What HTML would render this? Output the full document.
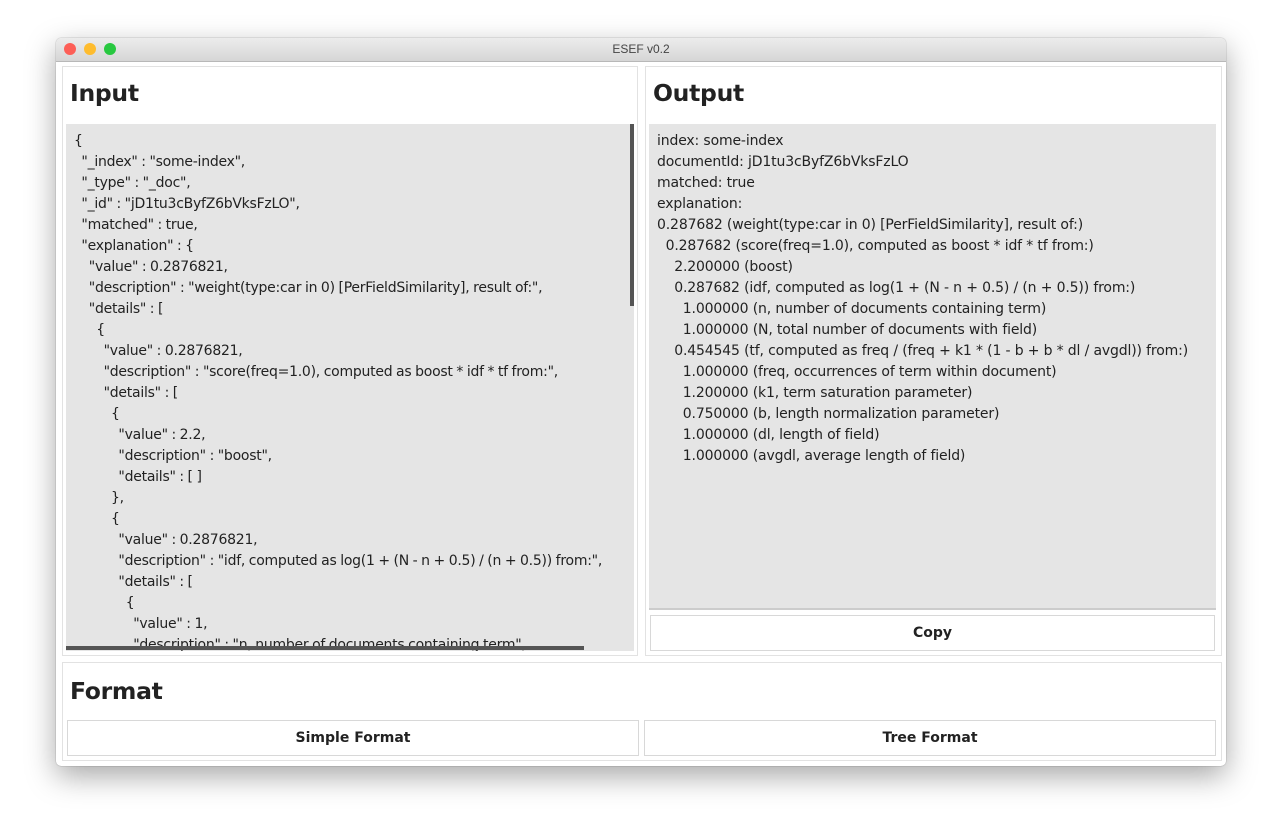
<!DOCTYPE html>
<html><head><style>
body{margin:0;width:1282px;height:840px;background:#fff;position:relative;overflow:hidden;font-family:"DejaVu Sans","Liberation Sans",sans-serif;}
.win{position:absolute;left:56px;top:38px;width:1170px;height:728px;background:#fff;border-radius:5px;box-shadow:0 10px 30px rgba(0,0,0,.35),0 0 1px rgba(0,0,0,.5);overflow:hidden}
.tb{height:23px;background:linear-gradient(#ececec,#d6d6d6);border-bottom:1px solid #b8b8b8;text-align:center;font:12px "Liberation Sans",sans-serif;line-height:23px;color:#444}
.dot{position:absolute;top:5px;width:12px;height:12px;border-radius:50%}
.p{position:absolute;border:1px solid #e2e2e2;background:#fff}
h1{position:absolute;margin:0;font-size:23.5px;font-weight:bold;color:#222;left:7px;top:12px;letter-spacing:-0.3px}
.ta{position:absolute;background:#e5e5e5;font-size:14px;line-height:21px;color:#222;white-space:pre;overflow:hidden;padding:7px 0 0 8px;box-sizing:border-box;letter-spacing:-0.15px}
.btn{position:absolute;border:1.5px solid #d8d8d8;background:#fff;box-sizing:border-box;text-align:center;font-weight:bold;font-size:14px;line-height:34px;color:#222}
</style></head><body>
<div class="win">
<div class="tb">ESEF v0.2</div>
<div class="dot" style="left:8px;background:#fd5f57"></div>
<div class="dot" style="left:28px;background:#febc2e"></div>
<div class="dot" style="left:48px;background:#28c840"></div>

<div class="p" style="left:6px;top:28px;width:574px;height:588px">
<h1>Input</h1>
<div class="ta" style="left:3px;top:57px;width:568px;height:527px;letter-spacing:-0.25px;word-spacing:-0.5px">{
  "_index" : "some-index",
  "_type" : "_doc",
  "_id" : "jD1tu3cByfZ6bVksFzLO",
  "matched" : true,
  "explanation" : {
    "value" : 0.2876821,
    "description" : "weight(type:car in 0) [PerFieldSimilarity], result of:",
    "details" : [
      {
        "value" : 0.2876821,
        "description" : "score(freq=1.0), computed as boost * idf * tf from:",
        "details" : [
          {
            "value" : 2.2,
            "description" : "boost",
            "details" : [ ]
          },
          {
            "value" : 0.2876821,
            "description" : "idf, computed as log(1 + (N - n + 0.5) / (n + 0.5)) from:",
            "details" : [
              {
                "value" : 1,
                "description" : "n, number of documents containing term",</div>
<div style="position:absolute;left:567px;top:57px;width:4px;height:182px;background:#555"></div>
<div style="position:absolute;left:3px;top:579px;width:518px;height:4px;background:#555"></div>
</div>

<div class="p" style="left:589px;top:28px;width:575px;height:588px">
<h1>Output</h1>
<div class="ta" style="left:3px;top:57px;width:567px;height:486px;border-bottom:2px solid #ccc">index: some-index
documentId: jD1tu3cByfZ6bVksFzLO
matched: true
explanation:
0.287682 (weight(type:car in 0) [PerFieldSimilarity], result of:)
  0.287682 (score(freq=1.0), computed as boost * idf * tf from:)
    2.200000 (boost)
    0.287682 (idf, computed as log(1 + (N - n + 0.5) / (n + 0.5)) from:)
      1.000000 (n, number of documents containing term)
      1.000000 (N, total number of documents with field)
    0.454545 (tf, computed as freq / (freq + k1 * (1 - b + b * dl / avgdl)) from:)
      1.000000 (freq, occurrences of term within document)
      1.200000 (k1, term saturation parameter)
      0.750000 (b, length normalization parameter)
      1.000000 (dl, length of field)
      1.000000 (avgdl, average length of field)</div>
<div class="btn" style="left:4px;top:548px;width:565px;height:36px">Copy</div>
</div>

<div class="p" style="left:6px;top:624px;width:1158px;height:97px">
<h1 style="top:14px">Format</h1>
<div class="btn" style="left:4px;top:57px;width:572px;height:36px">Simple Format</div>
<div class="btn" style="left:581px;top:57px;width:572px;height:36px">Tree Format</div>
</div>
</div>
</body></html>
